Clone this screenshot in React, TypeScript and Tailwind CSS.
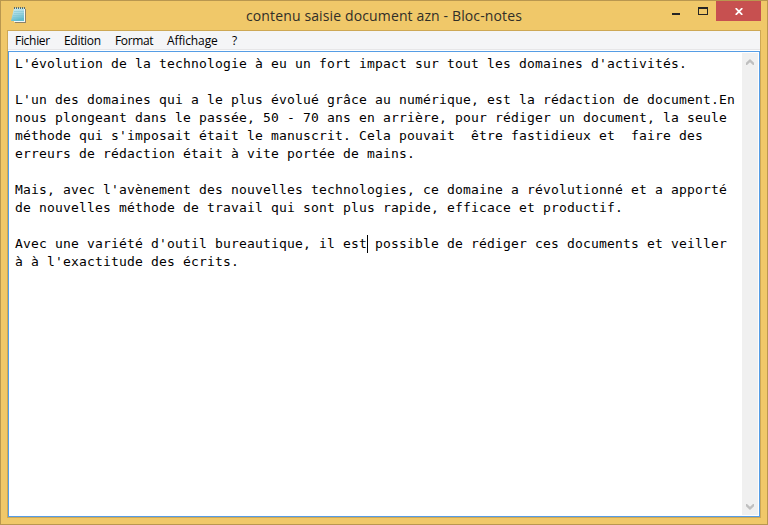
const menus = [
  { label: "Fichier", cls: "w-[49px] tracking-[-0.3px]" },
  { label: "Edition", cls: "w-[51px] tracking-[-0.3px]" },
  { label: "Format", cls: "w-[52px] tracking-[-0.35px]" },
  { label: "Affichage", cls: "w-[65px] tracking-[-0.12px]" },
  { label: "?", cls: "w-[20px]" },
];

const lines = [
  "L'évolution de la technologie à eu un fort impact sur tout les domaines d'activités.",
  "",
  "L'un des domaines qui a le plus évolué grâce au numérique, est la rédaction de document.En",
  "nous plongeant dans le passée, 50 - 70 ans en arrière, pour rédiger un document, la seule",
  "méthode qui s'imposait était le manuscrit. Cela pouvait  être fastidieux et  faire des",
  "erreurs de rédaction était à vite portée de mains.",
  "",
  "Mais, avec l'avènement des nouvelles technologies, ce domaine a révolutionné et a apporté",
  "de nouvelles méthode de travail qui sont plus rapide, efficace et productif.",
  "",
  "Avec une variété d'outil bureautique, il est| possible de rédiger ces documents et veiller",
  "à à l'exactitude des écrits.",
];

function NotepadIcon() {
  return (
    <svg width="16" height="17" viewBox="0 0 16 17">
      <defs>
        <linearGradient id="page" x1="0" y1="0" x2="0.3" y2="1">
          <stop offset="0" stopColor="#d3eef2" />
          <stop offset="0.55" stopColor="#a3d8e2" />
          <stop offset="1" stopColor="#62bccd" />
        </linearGradient>
      </defs>
      <path d="M4 2H15V16H4Z" fill="#8b826b" />
      <path d="M3 1H14V15H3Z" fill="#f3f8f8" />
      <path d="M3 1H13V14H0Z" fill="url(#page)" />
      <path d="M3 4.5H13M3 6.5H13M2 8.5H13M2 10.5H13" stroke="#7bc3d1" strokeWidth=".5" />
      <path d="M3.5 0V2M5.5 0V2M7.5 0V2M9.5 0V2M11.5 0V2M13.5 0V2" stroke="#536d74" />
    </svg>
  );
}

function Chevron({ down = false }: { down?: boolean }) {
  return (
    <svg width="8" height="6" viewBox="0 0 8 6" className={down ? "rotate-180" : ""}>
      <path d="M0 3.7L4 0L8 3.7V6H7L4 3.2L1 6H0Z" fill="#bfbfbf" />
    </svg>
  );
}

export default function App() {
  return (
    <div className="flex h-[525px] w-[768px] flex-col overflow-hidden border border-[#b9974f] bg-[#f0c869] px-[6px] pb-[6px] font-['Open_Sans','Noto_Sans',sans-serif]">
      <header className="flex h-[29px] shrink-0 items-start">
        <div className="w-[76px] pl-[4px] pt-[6px]"><NotepadIcon /></div>
        <h1 className="flex-1 whitespace-nowrap pt-[5px] text-center text-[14px] leading-[19px] tracking-[0.13px] text-[#302e28]">
          <span className="pl-[22px]">contenu saisie document azn - Bloc-notes</span>
        </h1>
        <div className="flex h-[20px] w-[98px] shrink-0">
          <button className="flex w-[26px] items-end pb-[6px] pl-[9px]" aria-label="Réduire"><span className="h-[2px] w-[8px] bg-[#252525]" /></button>
          <button className="flex w-[27px] items-start pl-[9px] pt-[6px]" aria-label="Agrandir"><span className="h-[8px] w-[10px] border border-t-2 border-[#252525]" /></button>
          <button className="flex w-[45px] items-center justify-center bg-[#c75050] pt-px" aria-label="Fermer">
            <svg width="8" height="7" viewBox="0 0 8 7"><path d="M.7.2L7.3 6.8M7.3.2L.7 6.8" stroke="white" strokeWidth="1.8" /></svg>
          </button>
        </div>
      </header>
      <main className="flex min-h-0 flex-1 flex-col border border-[#cda855] bg-white">
        <nav className="flex h-[19px] shrink-0 border-b border-[#e6e6e8] bg-[#f4f5f7] pl-[7px] text-[12px] leading-[20px] text-black">
          {menus.map((m) => <span key={m.label} className={m.cls}>{m.label}</span>)}
        </nav>
        <div className="mt-px flex min-h-0 flex-1 border border-[#569de5] bg-white">
          <div className="flex-1 pl-[6px] pt-[3px] font-['DejaVu_Sans_Mono',monospace] text-[13px] leading-[18px] tracking-[0.173px] text-black">
            {lines.map((line, i) => {
              const [before, after] = line.split("|");
              return (
                <div key={i} className="h-[18px] whitespace-pre">
                  {before}
                  {after !== undefined && <span className="mr-[-1px] inline-block h-[18px] w-px bg-black align-top" />}
                  {after}
                </div>
              );
            })}
          </div>
          <div className="mb-[1px] mr-[1px] mt-[1px] flex w-[16px] shrink-0 flex-col items-center justify-between bg-[#f0f0f0] pb-[5px] pt-[6px]">
            <Chevron /><Chevron down />
          </div>
        </div>
      </main>
    </div>
  );
}
